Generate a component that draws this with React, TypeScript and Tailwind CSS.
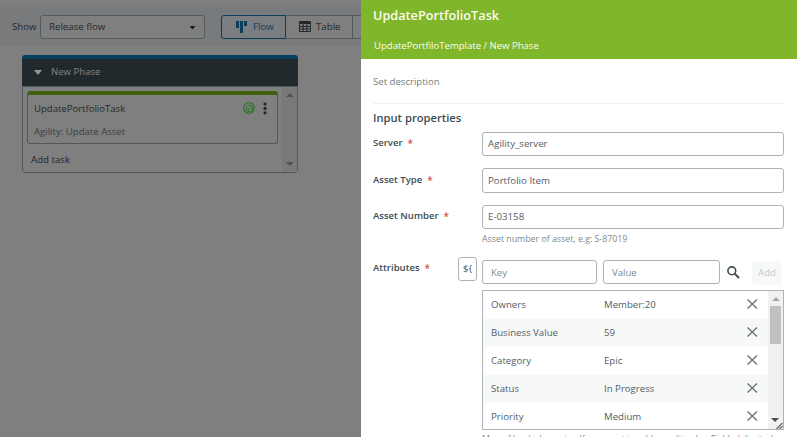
import React from "react";

const rows = [
  ["Owners", "Member:20"],
  ["Business Value", "59"],
  ["Category", "Epic"],
  ["Status", "In Progress"],
  ["Priority", "Medium"],
];

function Label({ text, className = "" }: { text: string; className?: string }) {
  return (
    <div className={`flex shrink-0 text-[9.55px] leading-[14px] font-semibold whitespace-pre text-[#3d4c53] ${className}`}>
      {text}
      <span className="ml-[5px] text-[10px] text-[#d0564c]">*</span>
    </div>
  );
}

function Field({ label, value, className, box, pad = "pt-[4px]" }: { label: string; value: string; className: string; box: string; pad?: string }) {
  return (
    <div className={`flex ${className}`}>
      <Label text={label} className={`w-[109px] ${pad}`} />
      <div className={`flex w-[302px] items-center rounded-[3px] border border-[#aeb3b5] pl-[5px] text-[9.7px] text-[#536067] ${box}`}>{value}</div>
    </div>
  );
}

function Background() {
  return (
    <div className="h-[437px] w-[361px] shrink-0 overflow-hidden bg-[#7f7f7f] text-[#23292c]">
      <div className="h-[7px] bg-[#7f7f7f]" />
      <div className="flex h-[39px] items-center bg-[#787a7b] pl-3">
        <span className="w-[28px] shrink-0 pt-px text-[9.7px]">Show</span>
        <div className="flex h-6 w-[165px] shrink-0 items-center justify-between rounded-[3px] border border-[#525c60] bg-[#7f7f7f] pr-[8px] pl-2 text-[9.7px]">
          <span className="pt-[2px]">Release flow</span>
          <svg width="7" height="4" className="mt-[3px]"><path d="M0.500 0h6L3.500 3.500z" fill="#181d20" /></svg>
        </div>
        <div className="ml-4 flex h-6 w-[65px] shrink-0 items-center rounded-l-[3px] border border-[#083d5c] bg-[#7b7e80] pl-[14px] text-[9.7px] text-[#083d5c]">
          <svg width="11" height="12" fill="#083d5c" className="mr-[6px]"><path d="M0 0h3v7H0zM4 0h3v12H4zM8 0h3v5H8z" /></svg>
          <span className="pt-[2px]">Flow</span>
        </div>
        <div className="flex h-6 w-[67px] shrink-0 items-center border-y border-r border-[#525c60] bg-[#7f7f7f] pl-[13px] text-[9.7px]">
          <svg width="12" height="11" className="mr-[5px]"><rect width="12" height="11" rx="1" fill="#1f282e" /><path d="M1 3h2.700v2H1zM4.700 3h2.700v2H4.700zM8.400 3h2.700v2H8.400zM1 6h2.700v1.500H1zM4.700 6h2.700v1.500H4.700zM8.400 6h2.700v1.500H8.400zM1 8.500h2.700V10H1zM4.700 8.500h2.700V10H4.700zM8.400 8.500h2.700V10H8.400z" fill="#7f7f7f" /></svg>
          <span className="pt-[2px]">Table</span>
        </div>
        <div className="h-6 w-2 shrink-0 border-y border-[#525c60] bg-[#7f7f7f]" />
      </div>
      <div className="mt-[9px] ml-[22px] h-[118px] w-[276px] overflow-hidden rounded-[3px]">
        <div className="h-1 bg-[#053f60]" />
        <div className="flex h-[27px] items-center bg-[#22292d] pl-3 text-[9.6px] text-[#818586]">
          <svg width="8" height="5" className="mr-[9px]"><path d="M0 0h8L4 5z" fill="#92979a" /></svg>
          New Phase
        </div>
        <div className="flex h-[87px] rounded-b-[3px] border border-[#50585c]">
          <div className="w-[259px] pt-[4px] pl-[4px]">
            <div className="h-[53px] w-[251px] overflow-hidden rounded-[3px] border border-t-0 border-[#50585c]">
              <div className="h-1 bg-[#406010]" />
              <div className="flex h-[24px] items-center pt-1 pl-[6px] text-[9.55px]">
                <span className="w-[209px]">UpdatePortfolioTask</span>
                <svg width="12" height="12" className="mb-[2px]" fill="none" stroke="#32712a"><circle cx="6" cy="6" r="5.300" strokeWidth="1.200" /><circle cx="6.600" cy="6.500" r="3.300" strokeWidth="1" /><path d="M5.500 9V7.300a1.500 1.500 0 0 1 3 0" strokeWidth="1" /></svg>
                <svg width="4" height="13" className="mb-px ml-2" fill="#202235"><circle cx="2" cy="2" r="1.600" /><circle cx="2" cy="6.400" r="1.600" /><circle cx="2" cy="10.800" r="1.600" /></svg>
              </div>
              <div className="mt-[6px] pl-[6px] text-[9.6px] leading-[14px] text-[#384144]">Agility: Update Asset</div>
            </div>
            <div className="mt-[9px] pl-[4px] text-[9.7px] leading-[14px]">Add task</div>
          </div>
          <div className="flex w-[15px] flex-col items-center justify-between bg-[#797979] pt-[6px] pb-[6px]">
            <svg width="8" height="4"><path d="M0 4h8L4 0z" fill="#515151" /></svg>
            <svg width="8" height="4"><path d="M0 0h8L4 4z" fill="#515151" /></svg>
          </div>
        </div>
      </div>
    </div>
  );
}

export default function App() {
  return (
    <div className="flex h-[437px] w-[797px] overflow-hidden font-['Open_Sans','Noto_Sans',sans-serif]">
      <Background />
      <div className="h-[437px] w-[436px] shrink-0 overflow-hidden bg-white">
        <div className="h-[59px] bg-[#80b62a] pt-[6px] pl-3 text-[#fbfdf0]">
          <div className="text-[12.7px] leading-[18px] font-semibold">UpdatePortfolioTask</div>
          <div className="mt-[15px] pl-[1px] text-[9.55px] leading-[14px]">UpdatePortfiloTemplate / New Phase</div>
        </div>
        <div className="ml-3 h-[45px] w-[411px] border-b border-[#f1f2f3] pt-[16px] text-[9.6px] leading-[14px] text-[#74817f]">Set description</div>
        <div className="pt-[5px] pl-3">
          <div className="h-[23px] text-[11.2px] leading-[18px] font-semibold text-[#3d4c53]">Input properties</div>
          <Field label="Server" value="Agility_server" className="h-[36px]" box="h-6" />
          <Field label="Asset Type" value="Portfolio Item" className="h-[37px]" box="h-[25px] pt-px" pad="pt-[5px]" />
          <Field label="Asset Number" value="E-03158" className="h-[26px]" box="h-6" />
          <div className="pt-[2px] pl-[109px] text-[8.8px] leading-[12px] text-[#7e898c]">Asset number of asset, e.g: S-87019</div>
          <div className="mt-[12px] flex h-[33px]">
            <Label text="Attributes" className="w-[85px] pt-[4px]" />
            <div className="flex h-6 w-[19px] items-center justify-center rounded-[3px] border border-[#aeb3b5] pt-px text-[9.6px] text-[#4a5960]">{"${"}</div>
            <div className="mt-[3px] ml-[5px] flex h-6 w-[115px] items-center rounded-[3px] border border-[#aeb3b5] pt-[2px] pl-2 text-[9.6px] text-[#7e898c]">Key</div>
            <div className="mt-[3px] ml-[6px] flex h-6 w-[117px] items-center rounded-[3px] border border-[#aeb3b5] pt-[2px] pl-2 text-[9.6px] text-[#7e898c]">Value</div>
            <svg width="13" height="13" className="mt-[9px] ml-[7px]" fill="none" stroke="#3d4c53"><circle cx="4.800" cy="4.800" r="3.900" strokeWidth="1.600" /><path d="M7.600 7.600 12 12" strokeWidth="2" /></svg>
            <div className="mt-1 ml-[12px] flex h-6 w-[30px] items-center justify-center rounded-[3px] bg-[#f7f9f9] text-[9.6px] text-[#c2cac9]">Add</div>
          </div>
          <div className="ml-[109px] flex h-[140px] w-[302px] border border-[#aeb3b5]">
            <div className="h-[138px] w-[285px] overflow-hidden">
              {rows.map(([key, value], i) => (
                <div key={key} className={`flex h-7 items-center pl-2 text-[9.65px] text-[#536067] ${i % 2 ? "bg-[#f7f9f9]" : "bg-white"}`}>
                  <span className="w-[113px] pt-px">{key}</span>
                  <span className="w-[143px] pt-px">{value}</span>
                  <svg width="11" height="10" className="mb-[3px]" stroke="#66737b" strokeWidth="1.300"><path d="M.5.5l9.500 9M10 .5l-9.500 9" /></svg>
                </div>
              ))}
            </div>
            <div className="flex w-[15px] flex-col items-center bg-[#f1f1f1] pt-[6px]">
              <svg width="8" height="4"><path d="M0 4h8L4 0z" fill="#a3a3a3" /></svg>
              <div className="mt-[5px] h-[38px] w-[11px] bg-[#c1c1c1]" />
              <svg width="15" height="13" className="mt-[72px]"><path d="M3 2h8L7 6z" fill="#505050" /><path d="M8.500 13l6-6M11.500 13l3-3" stroke="#666" strokeWidth="1.200" /></svg>
            </div>
          </div>
          <div className="mt-[3px] ml-[109px] text-[8.8px] leading-[12px] whitespace-nowrap text-[#7e898c]">Map of key/value pairs. If you want to add a multi-value Field, delimited</div>
        </div>
      </div>
    </div>
  );
}
